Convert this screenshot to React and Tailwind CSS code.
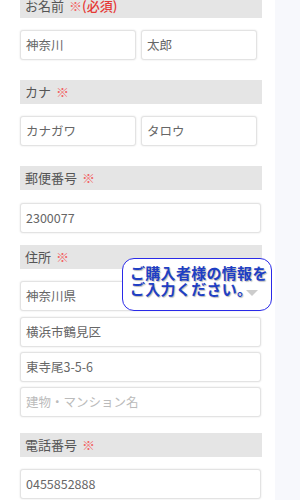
const font = { fontFamily: '"Noto Sans CJK JP", "Noto Sans", sans-serif' };

function Label({ text, extra, className = '' }) {
  return (
    <div className={`h-6 flex items-center pl-[5px] bg-[#e5e5e5] text-[13px] text-[#555] ${className}`}>
      <span>{text}</span>
      <span className="ml-[5px] text-[#f26464]">※</span>
      {extra && <span className="text-[#e53935] font-medium">{extra}</span>}
    </div>
  );
}

function Field({ value, placeholder, className = '' }) {
  return (
    <div
      className={`h-[30px] flex items-center pl-[5px] rounded-[3px] border border-[#e3e3e3] bg-white shadow-[0_0_2px_rgba(0,0,0,0.12)] text-[12.5px] ${
        value ? 'text-[#666]' : 'text-[#bbb]'
      } ${className}`}
    >
      {value || placeholder}
    </div>
  );
}

export default function App() {
  return (
    <div className="relative h-[500px] w-[300px] overflow-hidden bg-white flex" style={font}>
      <div className="w-[262px] pl-5 shrink-0">
        <Label text="お名前" extra="(必須)" className="-mt-[6px]" />
        <div className="mt-3 flex gap-[5px]">
          <Field value="神奈川" className="w-[116px]" />
          <Field value="太郎" className="w-[116px]" />
        </div>

        <Label text="カナ" className="mt-5" />
        <div className="mt-3 flex gap-[5px]">
          <Field value="カナガワ" className="w-[116px]" />
          <Field value="タロウ" className="w-[116px]" />
        </div>

        <Label text="郵便番号" className="mt-5" />
        <Field value="2300077" className="mt-[13px] w-[241px]" />

        <Label text="住所" className="mt-3" />
        <div className="relative mt-3">
          <Field value="神奈川県" className="w-[241px]" />
          <div className="absolute left-[102px] -top-[23px] w-[150px] h-[53px] rounded-[12px] border border-[#2a2ae8] bg-white pl-[7px] pt-[6px]">
            <p
              className="text-[15px] leading-[16px] font-bold text-[#1f3fc4] tracking-[0.3px]"
              style={{ textShadow: '1px 1px 1px #bbb' }}
            >
              ご購入者様の情報を
              <br />
              ご入力ください。
            </p>
            <div className="absolute right-[13px] bottom-[14px] w-0 h-0 border-l-[6px] border-r-[6px] border-t-[6px] border-l-transparent border-r-transparent border-t-[#ccc]" />
          </div>
        </div>
        <Field value="横浜市鶴見区" className="mt-[6px] w-[241px]" />
        <Field value="東寺尾3-5-6" className="mt-[5px] w-[241px]" />
        <Field placeholder="建物・マンション名" className="mt-[5px] w-[241px]" />

        <Label text="電話番号" className="mt-4" />
        <Field value="0455852888" className="mt-3 w-[241px]" />
      </div>
      <div className="w-[13px] shrink-0" />
      <div className="flex-1 bg-[#f7f8fc]" />
    </div>
  );
}
